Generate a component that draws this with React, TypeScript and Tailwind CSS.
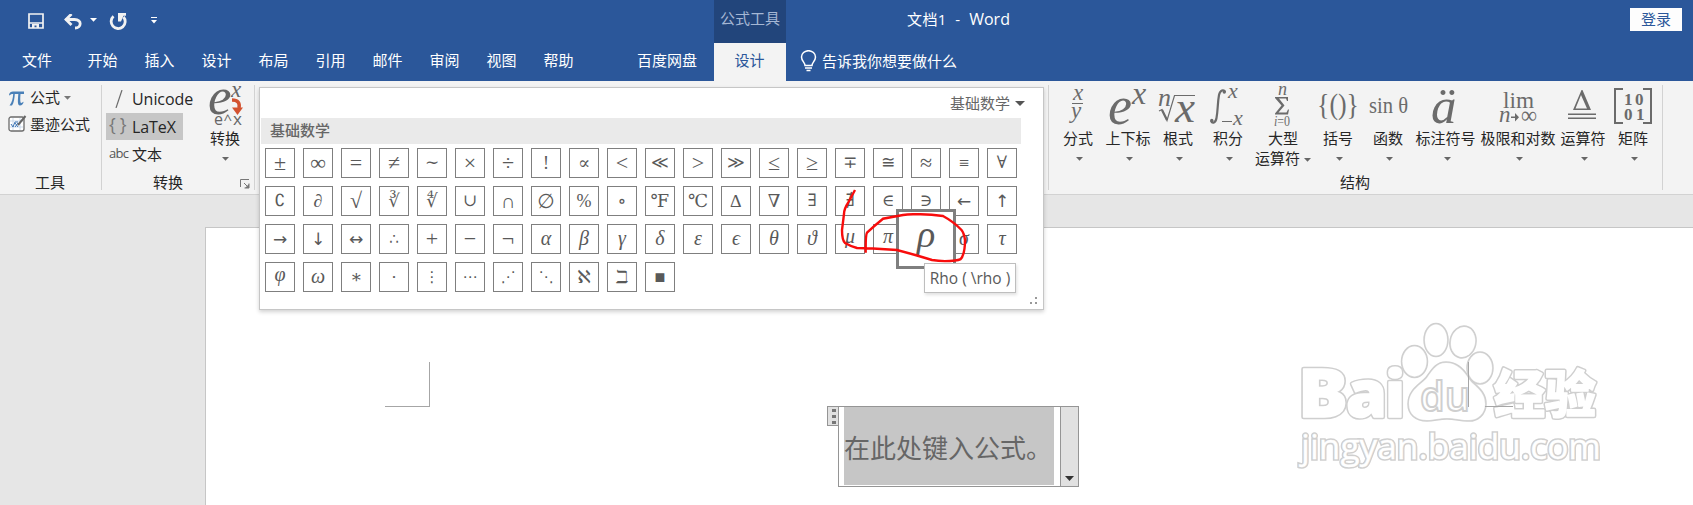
import { ReactNode } from "react";
import clsx from "clsx";

const tabs = ["开始", "插入", "设计", "布局", "引用", "邮件", "审阅", "视图", "帮助"];

const symbols = [
    ..."±∞=≠∼×÷!∝<≪>≫≤≥∓≅≈≡∀",
    ..."∁∂√∛∜∪∩∅%∘℉℃∆∇∃∄∈∋←↑",
    ..."→↓↔∴+−¬αβγδεϵθϑμπρστ",
    ..."φω∗∙⋮⋯⋰⋱ℵℶ■",
];

// Glyph sizes differ a lot between math fonts, so each family of signs has its own
const symbolStyle = (c: string) => {
    if ("αβγδεϵθϑρστω".includes(c)) return "italic text-[20px] leading-[26px]";
    if ("μπφ".includes(c)) return "italic text-[20px] leading-[22px]";
    if ("→↓↔←↑".includes(c)) return "text-[17px] leading-[28px] font-['DejaVu_Sans']";
    if ("±∞=≠×÷<>≤≥≈+−¬√".includes(c)) return "text-[22px] leading-[28px]";
    if ("∩∅".includes(c)) return "text-[20px] leading-[28px]";
    if ("≪≫∼∓≅∪∁∀∃∄∈∋".includes(c)) return "text-[17px] leading-[28px]";
    if ("∴⋮⋯⋰⋱".includes(c)) return "text-[15px] leading-[28px]";
    return "text-[18px] leading-[28px]";
};

const Caret = ({ className = "" }: { className?: string }) => (
    <svg className={clsx("shrink-0", className)} width="7" height="4" viewBox="0 0 7 4">
        <path d="M0 0h7L3.5 3.8z" fill="currentColor" />
    </svg>
);

const Separator = () => <div className="w-px h-[105px] mt-1 bg-[#d2d2d2] shrink-0" />;

// Glyph drawings above the structure buttons, y starts at the ribbon top
const structures: { label: string; width: string; icon: ReactNode; wrap?: string }[] = [
    {
        label: "分式", width: "w-[50px]", icon: (
            <>
                <text x="20" y="19" fontSize="23" fontStyle="italic">x</text>
                <path d="M19 22.500h11" stroke="#6b6b6b" />
                <text x="18" y="37" fontSize="23" fontStyle="italic">y</text>
            </>
        ),
    },
    {
        label: "上下标", width: "w-[50px]", icon: (
            <>
                <text x="5" y="43" fontSize="54" fontStyle="italic">e</text>
                <text x="29" y="23" fontSize="32" fontStyle="italic">x</text>
            </>
        ),
    },
    {
        label: "根式", width: "w-[50px]", icon: (
            <>
                <text x="5" y="25" fontSize="26" fontStyle="italic">n</text>
                <path d="M6 30l3-1.500 5 11L21.500 14.500H42" fill="none" stroke="#6b6b6b" strokeWidth="1.200" />
                <path d="M9 29l5 10" stroke="#6b6b6b" strokeWidth="2.200" />
                <text x="22" y="41" fontSize="45" fontStyle="italic">x</text>
            </>
        ),
    },
    {
        label: "积分", width: "w-[50px]", icon: (
            <>
                <path d="M22 11c-1-3-5-2-6 3-1.500 8-1 15-2.500 23-1 5-4 6-5.500 3" fill="none" stroke="#6b6b6b" strokeWidth="2.200" />
                <circle cx="21.300" cy="11" r="1.700" />
                <circle cx="8.800" cy="39.500" r="1.700" />
                <text x="25" y="17" fontSize="22" fontStyle="italic">x</text>
                <path d="M19 40.500h10" stroke="#6b6b6b" />
                <text x="30" y="44" fontSize="22" fontStyle="italic">x</text>
            </>
        ),
    },
    {
        label: "大型", wrap: "运算符", width: "w-[60px]", icon: (
            <>
                <text x="25" y="14" fontSize="18" fontStyle="italic">n</text>
                <path d="M22 16h13v4h-1l-1-2.500h-7l5.500 7-6 7h8l1.500-3h1l-1 5H22v-1l6.500-8L22 17z" />
                <text x="21" y="45" fontSize="14" textLength="16" lengthAdjust="spacingAndGlyphs"><tspan fontStyle="italic">i</tspan>=0</text>
            </>
        ),
    },
    { label: "括号", width: "w-[50px]", icon: <text x="4" y="33" fontSize="30" textLength="42" lengthAdjust="spacingAndGlyphs">{"{()}"}</text> },
    { label: "函数", width: "w-[50px]", icon: <text x="6" y="32" fontSize="23" textLength="39" lengthAdjust="spacingAndGlyphs">sin θ</text> },
    { label: "标注符号", width: "w-[65px]", icon: <text x="18" y="42" fontSize="51" fontStyle="italic">ä</text> },
    {
        label: "极限和对数", width: "w-[80px]", icon: (
            <>
                <text x="25" y="27" fontSize="24" textLength="31" lengthAdjust="spacingAndGlyphs">lim</text>
                <text x="21" y="41" fontSize="23" fontStyle="italic">n</text>
                <path d="M33 35.500h4v-3.500l4 4.200-4 4.200v-3.500h-4z" />
                <text x="43" y="42" fontSize="24" textLength="16" lengthAdjust="spacingAndGlyphs">∞</text>
            </>
        ),
    },
    {
        label: "运算符", width: "w-[50px]", icon: (
            <>
                <path d="M15 29L23.500 9h1L33 29zM17.500 27.500h11.500L23 14z" fillRule="evenodd" />
                <path d="M10 33.200h28M10 37.200h28" stroke="#6b6b6b" strokeWidth="1.500" />
            </>
        ),
    },
    {
        label: "矩阵", width: "w-[50px]", icon: (
            <>
                <path d="M15 8H7v34h8M35 8h8v34h-8" fill="none" stroke="#6b6b6b" strokeWidth="2" />
                <g fontWeight="bold" fontSize="17">
                    <text x="16" y="24">1</text>
                    <text x="27" y="24">0</text>
                    <text x="16" y="39">0</text>
                    <text x="28" y="39">1</text>
                </g>
            </>
        ),
    },
];

function TitleBar() {
    return (
        <div className="flex h-[43px]">
            <div className="flex items-start w-[714px] pl-7 pt-[13px]">
                <svg width="16" height="16" viewBox="0 0 16 16">
                    <path d="M1 1h14v14H1zM1 10h14" fill="none" stroke="#f2f2f2" strokeWidth="1.700" />
                    <path d="M4 11h7v4H8.500v-2.500H6.500V15H4z" fill="#f2f2f2" />
                </svg>
                <svg className="ml-5 mt-px" width="18" height="16" viewBox="0 0 18 16">
                    <path d="M1.500 5.500h9c8 0 7 8.500.5 8.500" fill="none" stroke="#f2f2f2" strokeWidth="2.800" />
                    <path d="M7.500 0L2 5.500 7.500 11" fill="none" stroke="#f2f2f2" strokeWidth="2.800" />
                </svg>
                <Caret className="text-white ml-2 mt-[5px]" />
                <svg className="ml-3 -mt-px" width="18" height="18" viewBox="0 0 18 18">
                    <path d="M4.500 4.300A7 7 0 1 0 14.500 5" fill="none" stroke="#f2f2f2" strokeWidth="2.800" />
                    <path d="M9 1H17v2.700h-2.500L12 9.500H9z" fill="#f2f2f2" />
                </svg>
                <svg className="ml-6 mt-1" width="6" height="7" viewBox="0 0 6 7">
                    <path d="M0 .5h6" stroke="#fff" />
                    <path d="M0 3h6L3 6.500z" fill="#fff" />
                </svg>
            </div>
            <div className="w-[72px] bg-[#22457b] pt-[7px] text-center text-[#a5b7d4]">公式工具</div>
            <div className="ml-[121px] mt-[7px] text-white whitespace-pre"><span className="tracking-[0.4px]">{"文档1  -  "}</span><span className="text-[16px]">Word</span></div>
            <div className="ml-auto mr-[11px] mt-2 w-[52px] h-[23px] bg-[#fdfdfd] text-[#2b579a] text-center leading-[22px]">登录</div>
        </div>
    );
}

function TabRow() {
    return (
        <div className="flex h-[38px] text-white leading-[34px]">
            <div className="w-[74px] pl-[22px]">文件</div>
            {tabs.map((tab) => (
                <div key={tab} className="w-[57px] text-center">{tab}</div>
            ))}
            <div className="w-[127px] pl-[50px]">百度网盘</div>
            <div className="w-[72px] text-center bg-[#f3f3f3] text-[#2b579a] pr-px">设计</div>
            <svg className="ml-[14px] mt-[7px]" width="17" height="22" viewBox="0 0 17 22">
                <path d="M5 15.500C5 12.500 1.500 11 1.500 7a7 6.300 0 0 1 14 0c0 4-3.500 5.500-3.500 8.500z" fill="none" stroke="#fff" strokeWidth="1.500" />
                <path d="M5 18h7M6.500 20.500h4" stroke="#fff" strokeWidth="1.500" />
            </svg>
            <div className="ml-[5px] mt-px">告诉我你想要做什么</div>
        </div>
    );
}

function ToolsGroup() {
    return (
        <div className="w-[101px] flex flex-col pt-1 pl-2 shrink-0">
            <div className="flex items-center h-6">
                <svg className="mt-px" width="16" height="16" viewBox="0 0 16 16">
                    <path d="M1 5C1.500 2 3 1.500 5 1.500h11V4h-3.500c-.3 4-.5 9 .8 9 .8 0 1.300-.5 1.700-1.200l.6.300C15 14.500 14 15.500 12 15.500c-3 0-2-6-1.700-11.500H6.800C6.500 8 6 13 4 15.500H1.500C4 12.500 5 8 5.200 4 3.500 4 2.500 4 1.700 5.500z" fill="#4a80b8" />
                </svg>
                <span className="ml-1.5">公式</span>
                <Caret className="ml-1 mt-0.5 text-[#777]" />
            </div>
            <div className="flex items-center h-[30px]">
                <svg className="shrink-0" width="19" height="18" viewBox="0 0 19 18">
                    <rect x="1" y="2" width="15" height="14" rx="2" fill="#fff" stroke="#6b6b6b" strokeWidth="1.300" />
                    <path d="M2 6h13M2 12h13M5 3v12M12 3v12" stroke="#b8cce4" strokeWidth=".7" />
                    <path d="M3 9l2 3 2-5h3M7 8l3 4M10 8l-3 4" stroke="#3a73b5" fill="none" />
                    <path d="M17.500 1L10 10" stroke="#666" strokeWidth="2" />
                </svg>
                <span className="ml-[3px] whitespace-nowrap">墨迹公式</span>
            </div>
            <div className="mt-auto mb-[2px] ml-[27px] h-5 leading-5">工具</div>
        </div>
    );
}

function ConvertGroup() {
    return (
        <div className="w-[152px] flex flex-col shrink-0">
            <div className="flex h-[89px]">
                <div className="w-[92px] ml-1 pt-1 flex flex-col shrink-0">
                    <div className="flex items-center h-7 pl-[9px]">
                        <svg className="shrink-0" width="8" height="18" viewBox="0 0 8 18"><path d="M7 0L1 18" stroke="#6b6b6b" strokeWidth="1.200" /></svg>
                        <span className="ml-[9px] text-[16px] tracking-[-0.05px]">Unicode</span>
                    </div>
                    <div className="flex items-center w-[77px] h-[27px] bg-[#c6c6c6]">
                        <span className="w-[26px] pl-[3px] text-[18px] pb-1 tracking-[4px] text-[#777]">{"{}"}</span>
                        <span className="text-[16px] tracking-[-0.1px]">LaTeX</span>
                    </div>
                    <div className="flex items-center h-[29px]">
                        <span className="w-[26px] pl-[3px] pb-0.5 text-[13px] tracking-[-0.7px] text-[#555]">abc</span>
                        <span>文本</span>
                    </div>
                </div>
                <div className="w-[54px] flex flex-col items-center shrink-0">
                    <svg className="shrink-0 overflow-visible" width="54" height="46" viewBox="2 0 54 46" fontFamily="'Liberation Serif', serif" fill="#666">
                        <text x="12" y="33" fontSize="53" fontStyle="italic">e</text>
                        <text x="35" y="16" fontSize="23" fontStyle="italic">x</text>
                        <path d="M36 19c6 0 8 3 7 8" fill="none" stroke="#d35230" strokeWidth="3.500" />
                        <path d="M36 26.500h11l-5.500 7.500z" fill="#d35230" />
                        <text x="18" y="44" fontSize="16" fontFamily="'Open Sans', sans-serif">e</text>
                        <text x="27.500" y="44" fontSize="15" fontFamily="'Open Sans', sans-serif">^</text>
                        <text x="37" y="44" fontSize="17" fontFamily="'Open Sans', sans-serif">x</text>
                    </svg>
                    <span className="h-6 leading-[23px]">转换</span>
                    <Caret className="mt-[6px] text-[#666]" />
                </div>
            </div>
            <div className="flex mt-auto mb-[2px] h-5 leading-5">
                <span className="ml-[51px]">转换</span>
                <svg className="ml-[57px] mt-[7px]" width="10" height="10" viewBox="0 0 10 10">
                    <path d="M.5 8V.5H9M4 4l4 4M9 4.500V9H4.500" fill="none" stroke="#777" />
                    <path d="M9 5v4H5z" fill="#777" />
                </svg>
            </div>
        </div>
    );
}

function StructureGroup() {
    return (
        <div className="w-[613px] pl-1 flex flex-col shrink-0">
            <div className="flex h-[92px]">
                {structures.map((s) => (
                    <div key={s.label} className={clsx("flex flex-col items-center shrink-0", s.width)}>
                        <svg className="w-full h-[46px] shrink-0 overflow-visible" fontFamily="'Liberation Serif', serif" fill="#6b6b6b">{s.icon}</svg>
                        <span className="h-6 leading-[23px] whitespace-nowrap shrink-0">{s.label}</span>
                        {s.wrap ? (
                            <span className="flex items-center h-[15px] leading-[15px] whitespace-nowrap">
                                {s.wrap}<Caret className="ml-1 mt-0.5 text-[#666]" />
                            </span>
                        ) : (
                            <Caret className="mt-[6px] ml-[3px] text-[#666]" />
                        )}
                    </div>
                ))}
            </div>
            <div className="mt-auto mb-[2px] h-5 leading-5 text-center pr-[5px]">结构</div>
        </div>
    );
}

function SymbolPanel() {
    return (
        <div className="absolute left-[259px] top-[87px] w-[785px] h-[223px] bg-white border border-[#c6c6c6] shadow-[0_2px_4px_rgba(0,0,0,0.18)] text-[#666]">
            <div className="flex items-center justify-end h-[30px] pr-[18px]">
                基础数学
                <svg className="ml-[5px]" width="10" height="5" viewBox="0 0 10 5"><path d="M0 0h10L5 5z" fill="#555" /></svg>
            </div>
            <div className="w-[760px] h-[26px] ml-px pl-[9px] leading-[24px] bg-[#eaeaea] font-medium">基础数学</div>
            <div className="grid grid-cols-[repeat(20,30px)] gap-2 pl-[5px] pt-1 font-['Liberation_Serif','DejaVu_Serif','DejaVu_Sans',serif]">
                {symbols.map((c) => (
                    <div key={c} className={clsx("w-[30px] h-[30px] border border-[#7f7f7f] text-center text-[#595959]", symbolStyle(c))}>
                        {c}
                    </div>
                ))}
            </div>
            <svg className="absolute right-[5px] bottom-[4px]" width="8" height="8" fill="#999">
                <path d="M5 0h2v2H5zM5 5h2v2H5zM0 5h2v2H0z" />
            </svg>
        </div>
    );
}

// Enlarged cell under the pointer, its tooltip and the pen mark
function Hover() {
    return (
        <>
            <div className="absolute left-[896px] top-[209px] w-[60px] h-[60px] bg-white border-[3px] border-[#7f7f7f] text-center italic text-[38px] leading-[44px] text-[#595959] font-['Liberation_Serif',serif]">ρ</div>
            <svg className="absolute left-[830px] top-[180px]" width="150" height="90" viewBox="830 180 150 90">
                <path
                    d="M855 190L848 203Q844 209 844 214L842 230Q842 240 845 243Q850 246 857 248L873 248.500L897 250L917 255.500L932 260Q943 262 955 260.500Q962 260 962.500 256Q965 251 965 240Q964 233 961.500 230Q954 222 943 216Q930 214 917 214.300Q908 214 903 215L883 218.700Q874 226 867 232.700Q865.500 235 865.700 252.700"
                    fill="none"
                    stroke="#f80c0c"
                    strokeWidth="2.400"
                />
            </svg>
            <div className="absolute left-[924px] top-[263px] w-[92px] h-[30px] bg-white border border-[#bebebe] shadow-[1px_2px_3px_rgba(0,0,0,0.12)] text-[#595959] text-center text-[15.5px] leading-[29px] whitespace-nowrap">Rho ( \rho )</div>
        </>
    );
}

function Watermark() {
    const bold = (
        <g strokeLinejoin="round" fontFamily="'Open Sans', sans-serif" fontWeight="800">
            <text x="1298" y="417" fontSize="67" textLength="50" lengthAdjust="spacingAndGlyphs">B</text>
            <text x="1346" y="417" fontSize="65" textLength="41" lengthAdjust="spacingAndGlyphs">a</text>
            <text x="1385" y="417" fontSize="63" textLength="20" lengthAdjust="spacingAndGlyphs">i</text>
            <text x="1494" y="413" fontSize="51" fontWeight="900" fontFamily="'Noto Sans CJK SC', sans-serif">经验</text>
        </g>
    );
    const light = (
        <>
            <ellipse cx="1414.500" cy="361.500" rx="12" ry="15" />
            <ellipse cx="1436" cy="340" rx="11" ry="15.500" />
            <ellipse cx="1463" cy="342" rx="12" ry="15" transform="rotate(12 1463 342)" />
            <ellipse cx="1480" cy="368" rx="12" ry="15" />
            <path d="M1446 363c11 0 18 8 22 15 5 8 17 12 17 26 0 10-8 17-18 16-7 0-12-2-20-2s-13 2-20 2c-11 0-18-6-18-16 0-14 12-19 18-26 5-7 9-15 19-15z" />
            <text x="1301" y="458.500" fontSize="34" fontFamily="'Open Sans', sans-serif" textLength="300" lengthAdjust="spacingAndGlyphs">jingyan.baidu.com</text>
        </>
    );
    return (
        <svg className="absolute left-[1280px] top-[310px]" width="340" height="180" viewBox="1280 310 340 180">
            <g fill="none" stroke="#cfcfcf" className="blur-[0.7px]">
                <g strokeWidth="4.500">{bold}</g>
                <g strokeWidth="3.500">{light}</g>
            </g>
            <g fill="#fff" stroke="#fff">
                <g strokeWidth="1.500">{bold}</g>
                <g strokeWidth=".3">{light}</g>
            </g>
            <text x="1420" y="411" fontSize="42" fontWeight="600" fontFamily="'Open Sans', sans-serif" fill="#fff" stroke="#cfcfcf" strokeWidth="2" textLength="50" lengthAdjust="spacingAndGlyphs">du</text>
            <path d="M1468.500 362v45M1468 406.500h1M1485 406.500h28" stroke="#a6a6a6" />
        </svg>
    );
}

function Page() {
    return (
        <div className="ml-[205px] mt-8 h-[278px] bg-white border-l border-t border-[#c6c6c6] flex items-start">
            <div className="ml-[179px] mt-[134px] w-[45px] h-[45px] border-r border-b border-[#a6a6a6]" />
            <div className="ml-[397px] mt-[178px] flex items-start">
                <div className="w-[11px] h-5 border border-r-0 border-[#959595] bg-[#e1e1e1] flex flex-col items-end justify-center gap-[3px] pr-0.5 pt-px">
                    <i className="w-[4px] h-[3px] bg-[#777]" />
                    <i className="w-[4px] h-[3px] bg-[#777]" />
                    <i className="w-[4px] h-[3px] bg-[#777]" />
                </div>
                <div className="w-[241px] h-[81px] border border-[#959595] bg-white flex">
                    <div className="w-[210px] h-[78px] ml-[5px] bg-[#c6c6c6] text-[26px] leading-[83px] text-[#666] whitespace-nowrap">在此处键入公式。</div>
                    <div className="ml-auto w-[18px] border-l border-[#959595] bg-[#e1e1e1] flex items-end justify-center pb-[5px]">
                        <svg width="9" height="5" viewBox="0 0 9 5"><path d="M0 0h9L4.500 5z" fill="#333" /></svg>
                    </div>
                </div>
            </div>
        </div>
    );
}

export default function App() {
    return (
        <div className="relative w-[1693px] h-[505px] overflow-hidden bg-[#e6e6e6] text-[15px] text-[#262626] font-['Open_Sans','Noto_Sans_CJK_SC',sans-serif]">
            <header className="bg-[#2b579a]">
                <TitleBar />
                <TabRow />
            </header>
            <div className="flex h-[114px] bg-[#f3f3f3] border-b border-[#d2d2d2]">
                <ToolsGroup />
                <Separator />
                <ConvertGroup />
                <Separator />
                <div className="w-[793px] shrink-0" />
                <Separator />
                <StructureGroup />
                <Separator />
            </div>
            <Page />
            <Watermark />
            <SymbolPanel />
            <Hover />
        </div>
    );
}
